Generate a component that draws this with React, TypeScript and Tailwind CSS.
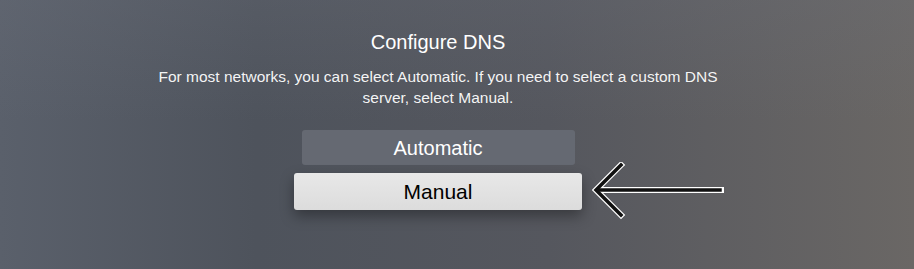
export default function App() {
  return (
    <div className="relative w-[914px] h-[269px] overflow-hidden bg-[linear-gradient(90deg,#5a606b_0%,#4e535c_28%,#55575e_60%,#6a6765_100%)] font-['Liberation_Sans',Arial,sans-serif]">
      {/* soft top haze */}
      <div className="absolute inset-0 bg-[linear-gradient(180deg,rgba(110,114,124,0.25)_0%,rgba(0,0,0,0)_45%)]" />

      <div className="relative flex flex-col items-center pt-[30px] pr-[38px]">
        <h1 className="text-[20px] leading-[24px] text-white">Configure DNS</h1>
        <p className="mt-[12px] w-[590px] text-center text-[15.5px] leading-[21px] text-white/95">
          For most networks, you can select Automatic. If you need to select a custom DNS server, select Manual.
        </p>

        <div className="mt-[22px] flex flex-col items-center gap-[8px]">
          <div className="flex h-[35px] w-[273px] items-center justify-center rounded-[3px] bg-[#676b74]/90 text-[20px] text-white">
            Automatic
          </div>
          <div className="relative">
            <div className="flex h-[37px] w-[288px] items-center justify-center rounded-[3px] bg-[linear-gradient(180deg,#e8e8e8_0%,#dcdcdc_100%)] text-[21px] text-black shadow-[0_6px_14px_rgba(0,0,0,0.35)]">
              Manual
            </div>
            <svg
              className="absolute left-[298px] top-[-11px]"
              width="134"
              height="60"
              viewBox="0 0 134 60"
            >
              <g fill="none" strokeLinecap="square">
                <path d="M29 3 L4 28 L29 53" stroke="#ffffff" strokeWidth="6" strokeLinejoin="miter" />
                <path d="M6 28 L129 28" stroke="#ffffff" strokeWidth="6" />
                <path d="M29 3 L4 28 L29 53" stroke="#111111" strokeWidth="3.5" strokeLinejoin="miter" />
                <path d="M6 28 L128 28" stroke="#111111" strokeWidth="3.5" />
              </g>
            </svg>
          </div>
        </div>
      </div>
    </div>
  );
}
